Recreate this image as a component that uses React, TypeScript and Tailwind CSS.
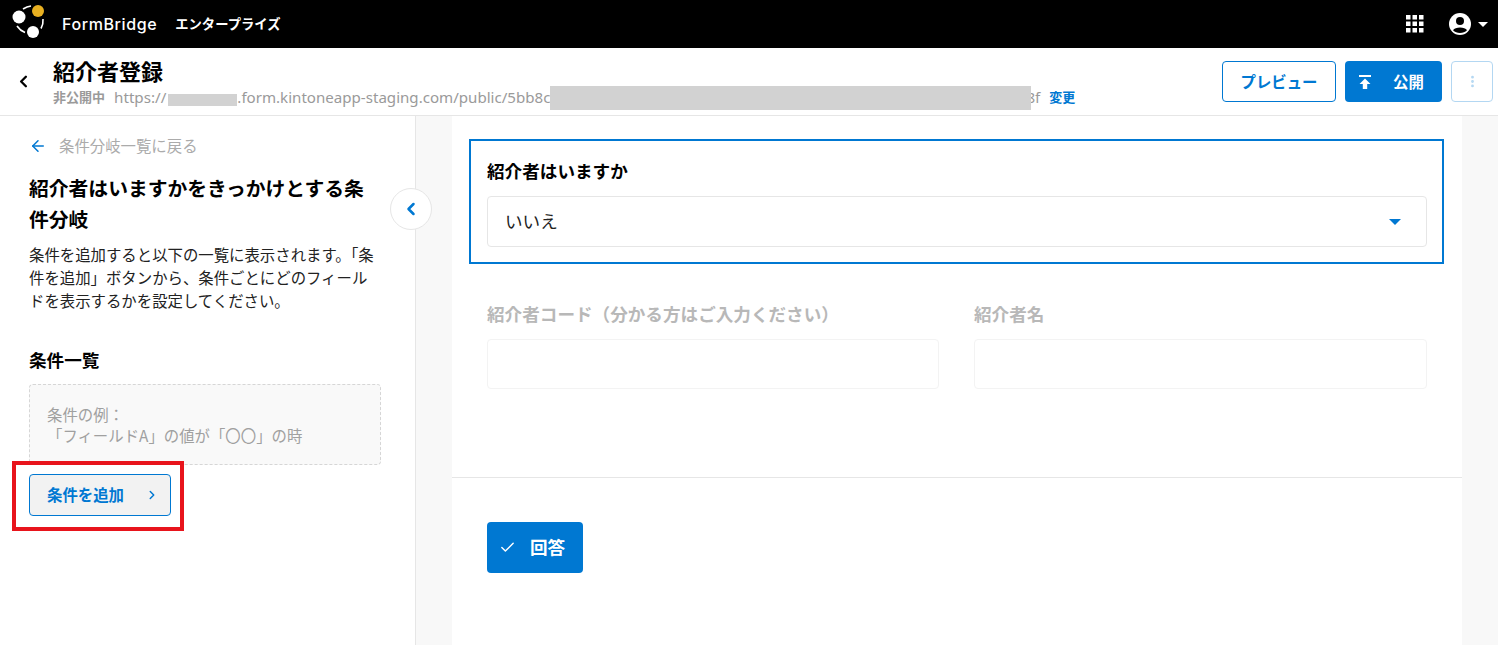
import React from 'react'
import { ArrowLeft, Check, ChevronLeft, ChevronRight, EllipsisVertical } from 'lucide-react'

const jp = "font-['Noto_Sans_CJK_JP','Noto_Sans',sans-serif]"

function Logo() {
  return (
    <svg width="36" height="36" viewBox="0 0 36 36" className="mb-[4px] shrink-0">
      <path d="M11 5 Q15 2.500 19 2" stroke="#fff" strokeWidth="1.6" fill="none" />
      <path d="M31 15 Q31.500 20 29 24.500" stroke="#fff" strokeWidth="1.6" fill="none" />
      <path d="M5 22 Q8 26.500 13 28.500" stroke="#fff" strokeWidth="1.6" fill="none" />
      <circle cx="7" cy="13" r="6.500" fill="#fff" />
      <circle cx="26" cy="7" r="6" fill="#e8b021" />
      <circle cx="21" cy="28" r="6" fill="#fff" />
    </svg>
  )
}

function GridIcon() {
  return (
    <svg width="18" height="18" viewBox="0 0 18 18" fill="#fff">
      {[0, 6.5, 13].map((y) =>
        [0, 6.5, 13].map((x) => <rect key={`${x}-${y}`} x={x} y={y} width="4.5" height="4.5" />),
      )}
    </svg>
  )
}

function UserIcon() {
  return (
    <svg width="24" height="24" viewBox="0 0 24 24">
      <circle cx="12" cy="12" r="11" fill="#fff" />
      <circle cx="12" cy="9" r="4" fill="#000" />
      <path d="M5 18.200 C7 14.500 17 14.500 19 18.200 C17 20 15 21 12 21 C9 21 7 20 5 18.200Z" fill="#000" />
    </svg>
  )
}

function PublishIcon() {
  return (
    <svg width="14" height="16" viewBox="0 0 14 16" fill="#fff">
      <rect x="1" y="1" width="12" height="2" />
      <path d="M7 4.500 L12.500 10 L9.200 10 L9.200 15 L4.800 15 L4.800 10 L1.500 10Z" />
    </svg>
  )
}

function TopBar() {
  return (
    <div className="flex h-12 items-center justify-between bg-black pl-[12px] pr-[10px]">
      <div className="flex items-center">
        <Logo />
        <span className="ml-[14px] font-['Inter',sans-serif] text-[16px] font-medium tracking-[0.6px] text-white">FormBridge</span>
        <span className="ml-[18px] text-[13.3px] font-bold text-white">エンタープライズ</span>
      </div>
      <div className="flex items-center">
        <GridIcon />
        <div className="ml-[24px]"><UserIcon /></div>
        <div className="ml-[6px] h-0 w-0 border-x-[5px] border-t-[5px] border-x-transparent border-t-white" />
      </div>
    </div>
  )
}

function HeaderBar() {
  return (
    <div className="flex h-[68px] items-center justify-between border-b border-[#e6e6e6] bg-white pr-[5px]">
      <div className="flex items-center">
        <ChevronLeft className="ml-[14px] h-[19px] w-[19px] text-black" strokeWidth={3} />
        <div className="ml-[20px] pt-[1px]">
          <div className="text-[22px] font-bold leading-[26px] text-black">紹介者登録</div>
          <div className="mt-[4px] flex h-[20px] items-center whitespace-nowrap">
            <span className="text-[13px] font-bold text-[#9a9a9a]">非公開中</span>
            <span className="ml-[9px] font-['Noto_Sans',sans-serif] text-[15.2px] text-[#9a9a9a]">https://</span>
            <span className="ml-[2px] mt-[6px] h-[12px] w-[69px] bg-[#d2d2d2]" />
            <span className="font-['Noto_Sans',sans-serif] text-[15.1px] text-[#9a9a9a]">.form.kintoneapp-staging.com/public/5bb8c</span>
            <span className="relative z-10 mt-[2px] h-[24px] w-[481px] shrink-0 bg-[#d2d2d2]" />
            <span className="ml-[-5px] font-['Noto_Sans',sans-serif] text-[15.2px] text-[#9a9a9a]">8f</span>
            <span className="ml-[9px] text-[13px] font-bold text-[#0078d2]">変更</span>
          </div>
        </div>
      </div>
      <div className="flex items-center">
        <button className="h-[41px] w-[114px] rounded border border-[#0078d2] bg-white text-[15.4px] font-bold text-[#0078d2]">プレビュー</button>
        <button className="ml-[9px] flex h-[41px] w-[97px] items-center rounded bg-[#0078d2] pl-[13px] text-[15.4px] font-bold text-white">
          <PublishIcon />
          <span className="ml-[21px]">公開</span>
        </button>
        <button className="ml-[9px] flex h-[41px] w-[42px] items-center justify-center rounded border border-[#b3d7f2] bg-white">
          <EllipsisVertical className="h-[15px] w-[15px] text-[#b3d7f2]" strokeWidth={2.5} />
        </button>
      </div>
    </div>
  )
}

function Sidebar() {
  return (
    <aside className="relative w-[416px] shrink-0 border-r border-[#e6e6e6] bg-white pl-[29px] pr-[34px] pt-[19px]">
      <div className="flex h-[22px] items-center">
        <ArrowLeft className="h-[18px] w-[18px] text-[#0078d2]" strokeWidth={2} />
        <span className="ml-[12px] text-[15.4px] text-[#ababab]">条件分岐一覧に戻る</span>
      </div>
      <h2 className="mt-[15px] text-[19.8px] font-bold leading-[31px] text-black">紹介者はいますかをきっかけとする条件分岐</h2>
      <p className="mt-[9px] text-[15.4px] leading-[23px] text-[#222]">
        条件を追加すると以下の一覧に表示されます。「条件を追加」ボタンから、条件ごとにどのフィールドを表示するかを設定してください。
      </p>
      <h3 className="mt-[36px] text-[17.6px] font-bold leading-[24px] text-black">条件一覧</h3>
      <div className="mt-[12px] h-[81px] w-[352px] rounded border border-dashed border-[#d6d6d6] bg-[#f9f9f9] px-[17px] pt-[19px] text-[15.4px] leading-[21px] text-[#a0a0a0]">
        <div>条件の例：</div>
        <div>「フィールドA」の値が「〇〇」の時</div>
      </div>
      <button className="mt-[9px] flex h-[42px] w-[142px] items-center justify-between rounded border border-[#0078d2] bg-[#f2f2f2] pl-[17px] pr-[11px] text-[15.4px] font-bold text-[#0078d2]">
        <span>条件を追加</span>
        <ChevronRight className="h-[14px] w-[14px]" strokeWidth={2.5} />
      </button>
      {/* red annotation over the add button */}
      <div className="absolute left-[12px] top-[345px] h-[70px] w-[172px] border-4 border-[#e8141c]" />
      <button className="absolute right-[-17px] top-[72px] flex h-[42px] w-[42px] items-center justify-center rounded-full border border-[#e6e6e6] bg-white">
        <ChevronLeft className="h-[20px] w-[20px] text-[#0078d2]" strokeWidth={3} />
      </button>
    </aside>
  )
}

function Field({ label, width }: { label: string; width: string }) {
  return (
    <div className={width}>
      <div className="text-[17.6px] font-bold leading-[24px] text-[#b8b8b8]">{label}</div>
      <div className="mt-[13px] h-[50px] rounded border border-[#f3f3f3] bg-white" />
    </div>
  )
}

function FormPane() {
  return (
    <main className="flex-1 bg-[#f8f8f8] pl-[36px] pr-[36px]">
      <div className="h-full w-[1010px] bg-white">
        <div className="pl-[17px] pr-[18px] pt-[23px]">
          <div className="h-[125px] border-2 border-[#0078d2] pl-[16px] pr-[15px] pt-[18px]">
            <div className="text-[17.6px] font-bold leading-[24px] text-black">紹介者はいますか</div>
            <div className="mt-[13px] flex h-[51px] items-center justify-between rounded border border-[#e6e6e6] bg-white pl-[17px] pr-[25px]">
              <span className="text-[17.6px] text-[#222]">いいえ</span>
              <div className="h-0 w-0 border-x-[6px] border-t-[6px] border-x-transparent border-t-[#0078d2]" />
            </div>
          </div>
          <div className="mt-[38px] flex gap-[35px] pl-[18px] pr-[17px]">
            <Field label="紹介者コード（分かる方はご入力ください）" width="w-[452px]" />
            <Field label="紹介者名" width="w-[453px]" />
          </div>
        </div>
        <div className="mt-[88px] border-t border-[#e6e6e6] pl-[35px] pt-[44px]">
          <button className="flex h-[51px] w-[96px] items-center rounded bg-[#0078d2] pl-[12px] text-[17.6px] font-bold text-white">
            <Check className="h-[17px] w-[17px]" strokeWidth={2} />
            <span className="ml-[14px]">回答</span>
          </button>
        </div>
      </div>
    </main>
  )
}

export default function App() {
  return (
    <div className={`flex h-[645px] w-[1498px] flex-col overflow-hidden ${jp}`}>
      <TopBar />
      <HeaderBar />
      <div className="flex min-h-0 flex-1">
        <Sidebar />
        <FormPane />
      </div>
    </div>
  )
}
